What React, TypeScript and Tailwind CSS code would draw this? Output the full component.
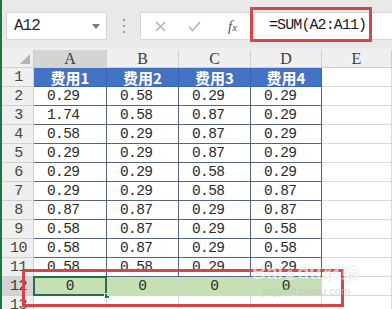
import React from "react";

const mono = "font-['Liberation_Mono','Noto_Sans_CJK_SC',monospace]";

const data: string[][] = [
  ["0.29", "0.58", "0.29", "0.29"],
  ["1.74", "0.58", "0.87", "0.29"],
  ["0.58", "0.29", "0.87", "0.29"],
  ["0.29", "0.29", "0.87", "0.29"],
  ["0.29", "0.29", "0.58", "0.29"],
  ["0.29", "0.29", "0.58", "0.87"],
  ["0.87", "0.87", "0.29", "0.87"],
  ["0.58", "0.87", "0.29", "0.58"],
  ["0.58", "0.87", "0.29", "0.58"],
  ["0.58", "0.58", "0.29", "0.29"],
];

function RowHead({ n, sel }: { n: number; sel?: boolean }) {
  return (
    <div
      className={`h-[19px] flex items-center justify-center border-b border-r border-[#d0d0d0] ${
        sel ? "bg-[#d4d4d4] text-[#3a3a3a]" : "bg-[#efefef] text-[#444]"
      } ${mono} text-[15px] tracking-[-0.6px] leading-none pl-[2px]`}
    >
      {n}
    </div>
  );
}

export default function App() {
  return (
    <div className="relative w-[392px] h-[309px] overflow-hidden bg-white flex">
      <div className="w-[2px] h-full bg-[#217346] shrink-0" />
      <div className="flex-1 flex flex-col">
        {/* Top bar */}
        <div className="h-[48px] bg-[#e9e9e9] flex items-start pt-[12px] shrink-0">
          <div className="ml-[4px] w-[101px] h-[28px] bg-white border border-[#d6d6d6] flex items-center justify-between pl-[7px] pr-[6px]">
            <span className={`${mono} text-[16px] tracking-[-1px] text-[#2a2a2a]`}>A12</span>
            <svg width="8" height="5" viewBox="0 0 8 5">
              <path d="M0 0 L8 0 L4 5 Z" fill="#7a7a7a" />
            </svg>
          </div>
          <div className="w-[33px] h-[28px] flex flex-col items-center justify-center gap-[4px]">
            <div className="w-[2px] h-[2px] bg-[#9a9a9a]" />
            <div className="w-[2px] h-[2px] bg-[#9a9a9a]" />
            <div className="w-[2px] h-[2px] bg-[#9a9a9a]" />
          </div>
          <div className="w-[113px] h-[28px] bg-white border border-[#d6d6d6] flex items-center">
            <svg className="ml-[14px]" width="11" height="11" viewBox="0 0 11 11">
              <path d="M1 1 L10 10 M10 1 L1 10" stroke="#b5b5b5" strokeWidth="1.6" />
            </svg>
            <svg className="ml-[22px]" width="13" height="11" viewBox="0 0 13 11">
              <path d="M1 5.5 L4.5 9.5 L12 1" stroke="#b5b5b5" strokeWidth="1.8" fill="none" />
            </svg>
            <span className="ml-[27px] font-['Liberation_Serif',serif] italic text-[15px] text-[#555] leading-none">
              f<span className="text-[11px]">x</span>
            </span>
          </div>
          <div className="w-[2px]" />
          <div className="flex-1 h-[28px] bg-white border-y border-[#d6d6d6] flex items-center pl-[14px]">
            <span className={`${mono} text-[15px] tracking-[-0.9px] text-[#1a1a1a]`}>=SUM(A2:A11)</span>
          </div>
        </div>

        {/* Column headers */}
        <div className="grid grid-cols-[32px_73px_72px_72px_71px_70px] h-[20px] shrink-0 bg-[#efefef] pt-[2px]">
          <div className="border-r border-b border-[#cfcfcf] flex items-end justify-end pr-[3px] pb-[3px]">
            <svg width="10" height="10" viewBox="0 0 10 10">
              <path d="M10 0 L10 10 L0 10 Z" fill="#b3b3b3" />
            </svg>
          </div>
          {["A", "B", "C", "D", "E"].map((c, i) => (
            <div
              key={c}
              className={`flex items-center justify-center border-r border-b border-[#cfcfcf] font-['Liberation_Serif',serif] text-[16px] leading-none text-[#3c3c3c] ${
                i === 0 ? "bg-[#d4d4d4]" : ""
              }`}
            >
              {c}
            </div>
          ))}
        </div>

        {/* Body */}
        <div className="grid grid-cols-[32px_73px_72px_72px_71px_70px]">
          {/* Row 1 */}
          <RowHead n={1} />
          {["费用1", "费用2", "费用3", "费用4"].map((t) => (
            <div
              key={t}
              className="h-[19px] bg-[#4472c4] border-b border-r border-[#3d63a8] flex items-center justify-center text-white font-bold text-[15px] leading-none font-['Noto_Sans_CJK_SC',sans-serif]"
            >
              {t}
            </div>
          ))}
          <div className="h-[19px] border-b border-r border-[#dadada]" />

          {data.map((row, r) => (
            <React.Fragment key={r}>
              <RowHead n={r + 2} />
              {row.map((v, c) => (
                <div
                  key={c}
                  className={`h-[19px] border-b border-r border-[#56657e] flex items-center pl-[13px] ${mono} text-[14.5px] tracking-[-0.6px] text-[#2a2a2a] leading-none`}
                >
                  {v}
                </div>
              ))}
              <div className="h-[19px] border-b border-r border-[#dadada]" />
            </React.Fragment>
          ))}

          {/* Row 12 */}
          <RowHead n={12} sel />
          {[0, 1, 2, 3].map((c) => (
            <div
              key={c}
              className={`relative h-[19px] bg-[#c6e0b4] border-b border-r border-[#d6d6d6] flex items-center justify-center ${mono} text-[14.5px] text-[#2a2a2a] leading-none`}
            >
              0
              {c === 0 && (
                <>
                  <div className="absolute -left-[1px] -top-[1px] -right-[1px] -bottom-[1px] border-2 border-[#217346]" />
                  <div className="absolute -right-[4px] -bottom-[4px] w-[6px] h-[6px] bg-[#217346] border border-white" />
                </>
              )}
            </div>
          ))}
          <div className="h-[19px] border-b border-r border-[#dadada]" />

          {/* Row 13 */}
          <RowHead n={13} />
          {[0, 1, 2, 3, 4].map((c) => (
            <div key={c} className="h-[19px] border-b border-r border-[#dadada]" />
          ))}
        </div>
      </div>

      {/* Red highlight boxes */}
      <div className="absolute left-[250px] top-[7px] w-[122px] h-[35px] border-[3px] border-[#d04a4a]" />
      <div className="absolute left-[22px] top-[269px] w-[322px] h-[38px] border-[3px] border-[#d64545]" />

      {/* Watermark */}
      <div className="absolute left-[252px] top-[262px] flex flex-col items-center opacity-60 pointer-events-none">
        <div className="flex items-end font-['Liberation_Sans',sans-serif] font-bold text-[20px] leading-none text-white [text-shadow:0_0_1px_#8a8a8a]">
          <span>Bai</span>
          <span className="text-[14px] mx-[1px]">❀</span>
          <span>du</span>
          <span className="ml-[2px] font-['Noto_Sans_CJK_SC',sans-serif] text-[18px]">经验</span>
        </div>
        <div className="mt-[4px] font-['Liberation_Sans',sans-serif] text-[11px] leading-none text-[#c4c4c4]">
          jingyan.baidu.com
        </div>
      </div>
    </div>
  );
}
